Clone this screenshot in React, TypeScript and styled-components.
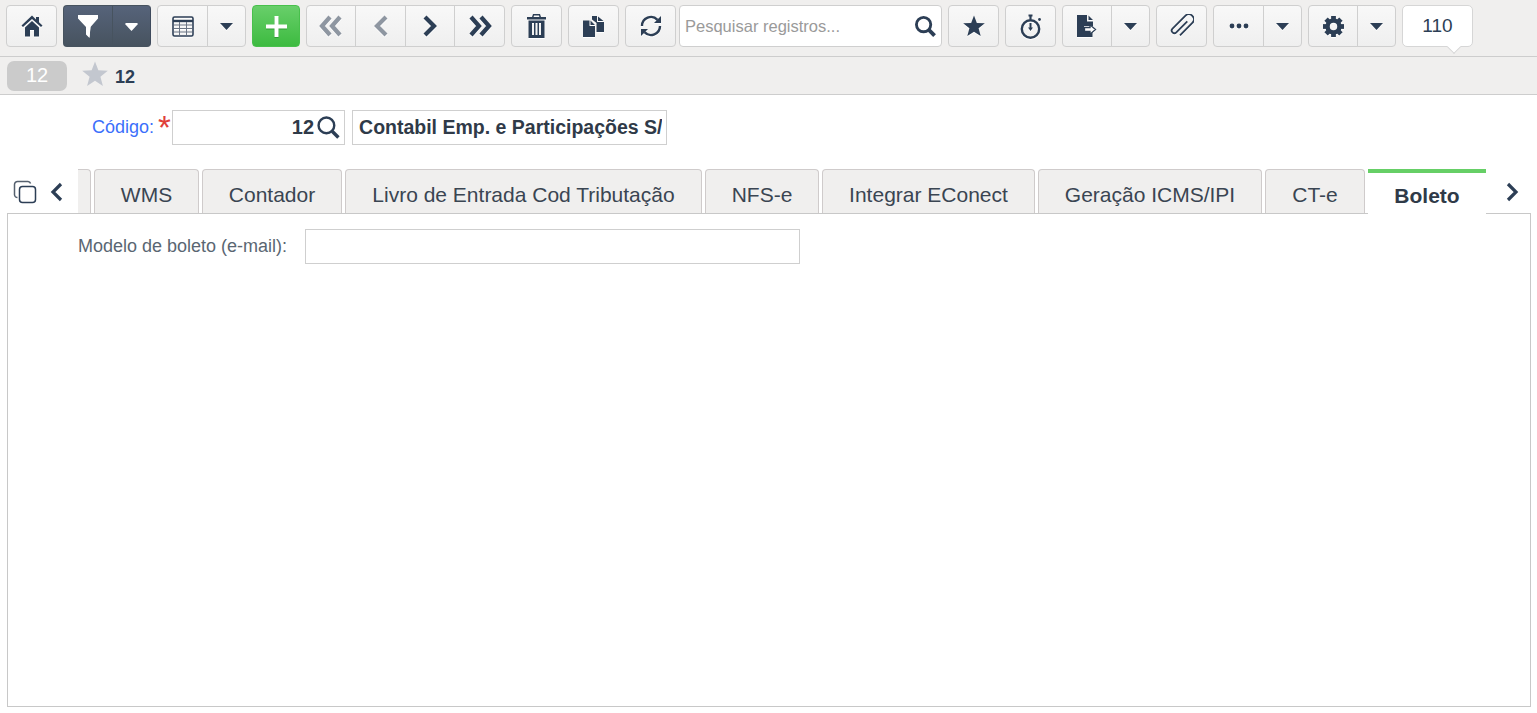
import { FC, ReactNode } from "react";
import styled, { createGlobalStyle } from "styled-components";

const navy = "#2c3e55";

const GlobalStyle = createGlobalStyle`
  html, body {
    margin: 0;
    padding: 0;
    height: 100%;
    background: #fff;
    font-family: "Liberation Sans", Arial, sans-serif;
    color: ${navy};
    overflow: hidden;
  }
`;

const Page = styled.div`
  display: flex;
  flex-direction: column;
  height: 713px;
`;

const Toolbar = styled.div`
  display: flex;
  align-items: flex-start;
  gap: 6px;
  height: 57px;
  padding: 5px 0 0 6px;
  box-sizing: border-box;
  background: #f0efee;
  border-bottom: 1px solid #cdcdcd;
`;

const Btn = styled.div<{ $w?: number }>`
  display: flex;
  align-items: center;
  justify-content: center;
  box-sizing: border-box;
  width: ${(p) => p.$w ?? 51}px;
  height: 42px;
  flex: none;
  border: 1px solid #cfcfcf;
  border-radius: 4px;
  background: linear-gradient(#f8f8f8, #efefef);
  color: ${navy};
  svg {
    filter: drop-shadow(0 1px 0 #fff);
  }
`;

const Group = styled.div<{ $dark?: boolean }>`
  display: flex;
  flex: none;
  ${Btn} {
    border-radius: 0;
    margin-left: -1px;
    ${(p) =>
      p.$dark &&
      `background: linear-gradient(#56637a, #47535f);
       border-color: #47535f;
       border-right-color: #3e4a5c;
       color: #fff;`}
  }
  ${Btn}:first-child {
    margin-left: 0;
    border-radius: 4px 0 0 4px;
  }
  ${Btn}:last-child {
    border-radius: 0 4px 4px 0;
  }
`;

const AddBtn = styled(Btn)`
  border-color: #48c04c;
  background: linear-gradient(#68cf6a, #3dbb40);
  color: #fff;
  svg {
    filter: drop-shadow(0 1px 0 #2f9a33);
  }
`;

const SearchBox = styled.div`
  display: flex;
  align-items: center;
  justify-content: space-between;
  box-sizing: border-box;
  width: 263px;
  height: 42px;
  margin-left: -3px;
  padding: 0 5px 0 5px;
  flex: none;
  background: #fff;
  border: 1px solid #cfcfcf;
  border-radius: 4px;
  font-size: 16.5px;
  color: #9a9a9a;
`;

const Counter = styled.div`
  position: relative;
  display: flex;
  align-items: center;
  justify-content: center;
  box-sizing: border-box;
  width: 71px;
  height: 42px;
  background: #fff;
  border: 1px solid #d6d6d6;
  border-radius: 5px;
  font-size: 19px;
  color: ${navy};
  &::after {
    content: "";
    position: absolute;
    left: 46px;
    bottom: -6px;
    width: 9px;
    height: 9px;
    background: #fff;
    border-right: 1px solid #d6d6d6;
    border-bottom: 1px solid #d6d6d6;
    transform: rotate(45deg);
  }
`;

const RecordBar = styled.div`
  display: flex;
  align-items: center;
  height: 38px;
  padding-left: 7px;
  box-sizing: border-box;
  background: #f0efee;
  border-bottom: 1px solid #cdcdcd;
`;

const RecordPill = styled.div`
  display: flex;
  align-items: center;
  justify-content: center;
  width: 60px;
  height: 30px;
  background: #cbcbcb;
  border-radius: 7px;
  color: #fff;
  font-size: 20px;
  margin-right: 15px;
`;

const RecordStar = styled.span`
  display: flex;
  margin-bottom: 4px;
`;

const RecordName = styled.span`
  margin: 3px 0 0 7px;
  font-size: 18px;
  font-weight: bold;
`;

const CodeRow = styled.div`
  display: flex;
  align-items: center;
  height: 35px;
  margin-top: 15px;
  padding-left: 92px;
`;

const Label = styled.label<{ $blue?: boolean }>`
  font-size: 18px;
  color: ${(p) => (p.$blue ? "#3b6ffb" : "#5a6672")};
`;

const Required = styled.span`
  width: 14px;
  margin-left: 4px;
  font-size: 33px;
  line-height: 24px;
  height: 24px;
  color: #e0403a;
`;

const CodeInput = styled.div`
  display: flex;
  align-items: center;
  justify-content: flex-end;
  box-sizing: border-box;
  width: 173px;
  height: 35px;
  padding-right: 4px;
  gap: 3px;
  border: 1px solid #cfcfcf;
  font-size: 20px;
  font-weight: bold;
  color: #2f3a48;
`;

const NameInput = styled.div`
  box-sizing: border-box;
  width: 315px;
  height: 35px;
  margin-left: 7px;
  padding: 0 4px 0 6px;
  line-height: 33px;
  border: 1px solid #cfcfcf;
  font-size: 19.5px;
  font-weight: bold;
  color: #2f3a48;
`;

const NameText = styled.div`
  white-space: nowrap;
  overflow: hidden;
`;

const TabRow = styled.div`
  display: flex;
  align-items: flex-end;
  height: 44px;
  margin-top: 24px;
  padding-left: 13px;
`;

const TabTools = styled.div`
  display: flex;
  align-items: center;
  width: 65px;
  height: 44px;
  padding-top: 2px;
  box-sizing: border-box;
  gap: 12px;
  flex: none;
`;

const Tab = styled.div<{ $w: number; $active?: boolean }>`
  display: flex;
  align-items: center;
  justify-content: center;
  box-sizing: border-box;
  width: ${(p) => p.$w}px;
  height: 44px;
  flex: none;
  margin-right: 3px;
  font-size: 21px;
  color: #3a4552;
  background: #f0efee;
  border: 1px solid #cfcbcb;
  border-bottom: 0;
  border-radius: 4px 4px 0 0;
  padding-top: 6px;
  ${(p) =>
    p.$active &&
    `background: #fff;
     border: 0;
     border-top: 4px solid #66cf66;
     border-radius: 0;
     font-weight: bold;
     color: #2f3a48;
     position: relative;
     z-index: 1;
     height: 45px;
     margin-bottom: -1px;
     padding-top: 5px;`}
`;

const TabStub = styled(Tab)`
  border-left: 0;
  border-radius: 0 4px 0 0;
`;

const TabNext = styled.div`
  display: flex;
  align-items: center;
  margin-left: 15px;
  height: 44px;
  padding-top: 2px;
  box-sizing: border-box;
`;

const Panel = styled.div`
  box-sizing: border-box;
  height: 494px;
  margin: 0 6px 0 7px;
  padding: 15px 0 0 70px;
  border: 1px solid #c8c8c8;
`;

const FieldRow = styled.div`
  display: flex;
  align-items: center;
  gap: 18px;
`;

const TextField = styled.div`
  box-sizing: border-box;
  width: 495px;
  height: 35px;
  border: 1px solid #cfcfcf;
`;

const Caret: FC = () => (
  <svg width="13" height="7" viewBox="0 0 13 7">
    <path d="M0 0h13L6.500 7z" fill="currentColor" />
  </svg>
);

const Chevrons: FC<{ points: string[]; faded?: boolean; w?: number; weight?: number }> = ({
  points,
  faded,
  w = 16,
  weight = 4.2,
}) => (
  <svg width={w} height="24" viewBox={`0 0 ${w} 24`} fill="none" stroke={faded ? "#8e96a1" : navy} strokeWidth={weight}>
    {points.map((p) => (
      <polyline key={p} points={p} />
    ))}
  </svg>
);

const Home: FC = () => (
  <svg width="22" height="22" viewBox="0 0 22 22" fill={navy}>
    <path d="M11 .5.500 10.500 2 12 11 4l9 8 1.500-1.500L18 7.200V2h-3v2.400z" />
    <path d="M4 12.500 11 6l7 6.500V21.500h-5V15H9v6.500H4z" />
  </svg>
);

const Funnel: FC = () => (
  <svg width="20" height="22" viewBox="0 0 20 22">
    <path d="M0 0h20v2.500L12.500 11l-1 11L8 18.500V11L0 2.500z" fill="#fff" />
  </svg>
);

const TableIcon: FC = () => (
  <svg width="22" height="21" viewBox="0 0 22 21" fill="none">
    <rect x="1" y="1" width="20" height="19" rx="1.500" stroke={navy} strokeWidth="1.600" />
    <path d="M1 5h20" stroke={navy} strokeWidth="2.400" />
    <path d="M2 9h18M2 12.500h18M2 16h18M7.500 6v13M14.500 6v13" stroke="#6a7484" strokeWidth="1" />
  </svg>
);

const Plus: FC = () => (
  <svg width="21" height="21" viewBox="0 0 21 21">
    <path d="M8.500 0h4v8.500H21v4h-8.500V21h-4v-8.500H0v-4h8.500z" fill="#fff" />
  </svg>
);

const Trash: FC = () => (
  <svg width="19" height="24" viewBox="0 0 19 24" fill={navy}>
    <path d="M6 0h7l1 3h5v2.500H0V3h5zM7 1.500 6.600 3h5.800L12 1.500z" fillRule="evenodd" />
    <path d="M1.500 6.500h16V24h-16zM5 9v12h2V9zm3.500 0v12h2V9zM12 9v12h2V9z" fillRule="evenodd" />
  </svg>
);

const CopyIcon: FC = () => (
  <svg width="21" height="21" viewBox="0 0 21 21" fill={navy}>
    <path d="M9 0h5v6h7v10h-7.500V7L9 3.500zM15 .5 20.500 5H15z" />
    <path d="M0 4.500h6.500V10H12v11H0zM7.500 4.500l4.500 4.500H7.500z" />
  </svg>
);

const Refresh: FC = () => (
  <svg width="22" height="22" viewBox="0 0 22 22" fill="none" stroke={navy} strokeWidth="2.400">
    <path d="M2 11a9 9 0 0 1 15.500-6.200" />
    <path d="M20 11a9 9 0 0 1-15.500 6.200" />
    <path d="M21 1v7h-7z" fill={navy} stroke="none" />
    <path d="M1 21v-7h7z" fill={navy} stroke="none" />
  </svg>
);

const Timer: FC = () => (
  <svg width="22" height="25" viewBox="0 0 22 25" fill="none" stroke={navy}>
    <circle cx="10.500" cy="15" r="8.700" strokeWidth="2.400" />
    <path d="M10.500 9v5" strokeWidth="2" />
    <path d="M8 13.500h5l-2.500 3.500z" fill={navy} stroke="none" />
    <path d="M8.500 1.500h4M10.500 1.500v4" strokeWidth="2.200" />
    <circle cx="19.500" cy="5.500" r="1.400" fill={navy} stroke="none" />
  </svg>
);

const ExportIcon: FC = () => (
  <svg width="20" height="22" viewBox="0 0 20 22">
    <path d="M0 0h10v6.500h6V11h-6v0H7v6h8.500v5H0zM11.500.5 16 5h-4.500z" fill={navy} />
    <path d="M7.500 12.500h5.500V9.800l5.500 4.700-5.500 4.700V16.500H7.500z" fill="#fff" stroke={navy} strokeWidth="1.300" />
  </svg>
);

const Clip: FC = () => (
  <svg width="24" height="24" viewBox="0 0 24 24" fill="none" stroke={navy} strokeWidth="1.800">
    <g transform="rotate(45 12 12)">
      <path d="M12.500 5v15.500a2.700 2.700 0 0 1-5.400 0V2.500a5 5 0 0 1 10 0V20" />
    </g>
  </svg>
);

const Dots: FC = () => (
  <svg width="20" height="6" viewBox="0 0 20 6" fill={navy}>
    <circle cx="3" cy="3" r="2.400" />
    <circle cx="10" cy="3" r="2.400" />
    <circle cx="17" cy="3" r="2.400" />
  </svg>
);

const Gear: FC = () => (
  <svg width="21" height="21" viewBox="0 0 22 22" fill={navy}>
    <circle cx="11" cy="11" r="6.200" fill="none" stroke={navy} strokeWidth="4.600" />
    {[0, 45, 90, 135, 180, 225, 270, 315].map((a) => (
      <rect key={a} x="8.500" y="0" width="5" height="5" transform={`rotate(${a} 11 11)`} />
    ))}
  </svg>
);

const Star: FC<{ size: number; color?: string }> = ({ size, color = navy }) => (
  <svg width={size} height={size} viewBox="0 0 24 24" fill={color}>
    <path d="M12 0.500 15.100 8.600 23.800 9 17 14.500 19.300 23 12 18.200 4.700 23 7 14.500 .2 9l8.700-.4z" />
  </svg>
);

const Magnifier: FC<{ size: number; weight: number }> = ({ size, weight }) => (
  <svg width={size} height={size} viewBox="0 0 22 22" fill="none" stroke={navy}>
    <circle cx="9" cy="9" r="7.500" strokeWidth={weight} />
    <path d="M14.500 14.500 20.500 20.500" strokeWidth={weight + 1} />
  </svg>
);

const CopyOutline: FC = () => (
  <svg width="24" height="24" viewBox="0 0 24 24" fill="none" stroke={navy} strokeWidth="1.500">
    <rect x="6.500" y="6.500" width="16" height="16" rx="3" />
    <path d="M4.500 17.500A3 3 0 0 1 1.500 15V4.500a3 3 0 0 1 3-3H15a3 3 0 0 1 2.600 2" stroke="#55606e" />
  </svg>
);

const IconBtn: FC<{ w?: number; children: ReactNode }> = ({ w, children }) => <Btn $w={w}>{children}</Btn>;

const tabs = [
  { label: "WMS", w: 105 },
  { label: "Contador", w: 140 },
  { label: "Livro de Entrada Cod Tributação", w: 357 },
  { label: "NFS-e", w: 114 },
  { label: "Integrar EConect", w: 213 },
  { label: "Geração ICMS/IPI", w: 224 },
  { label: "CT-e", w: 100 },
];

export default function App() {
  return (
    <Page>
      <GlobalStyle />
      <Toolbar>
        <IconBtn>
          <Home />
        </IconBtn>
        <Group $dark>
          <Btn $w={50}>
            <Funnel />
          </Btn>
          <Btn $w={39}>
            <Caret />
          </Btn>
        </Group>
        <Group>
          <Btn $w={51}>
            <TableIcon />
          </Btn>
          <Btn $w={39}>
            <Caret />
          </Btn>
        </Group>
        <AddBtn $w={48}>
          <Plus />
        </AddBtn>
        <Group>
          <Btn $w={50}>
            <Chevrons faded w={24} points={["11,3 3,12 11,21", "21,3 13,12 21,21"]} />
          </Btn>
          <Btn $w={51}>
            <Chevrons faded points={["13,3 4,12 13,21"]} />
          </Btn>
          <Btn $w={50}>
            <Chevrons points={["3,3 12,12 3,21"]} />
          </Btn>
          <Btn $w={51}>
            <Chevrons w={24} points={["3,3 11,12 3,21", "13,3 21,12 13,21"]} />
          </Btn>
        </Group>
        <IconBtn>
          <Trash />
        </IconBtn>
        <IconBtn>
          <CopyIcon />
        </IconBtn>
        <IconBtn>
          <Refresh />
        </IconBtn>
        <SearchBox>
          Pesquisar registros...
          <Magnifier size={21} weight={3} />
        </SearchBox>
        <IconBtn>
          <Star size={22} />
        </IconBtn>
        <IconBtn>
          <Timer />
        </IconBtn>
        <Group>
          <Btn $w={50}>
            <ExportIcon />
          </Btn>
          <Btn $w={39}>
            <Caret />
          </Btn>
        </Group>
        <IconBtn>
          <Clip />
        </IconBtn>
        <Group>
          <Btn $w={51}>
            <Dots />
          </Btn>
          <Btn $w={39}>
            <Caret />
          </Btn>
        </Group>
        <Group>
          <Btn $w={50}>
            <Gear />
          </Btn>
          <Btn $w={39}>
            <Caret />
          </Btn>
        </Group>
        <Counter>110</Counter>
      </Toolbar>
      <RecordBar>
        <RecordPill>12</RecordPill>
        <RecordStar>
          <Star size={26} color="#c3c7cf" />
        </RecordStar>
        <RecordName>12</RecordName>
      </RecordBar>
      <CodeRow>
        <Label $blue>Código:</Label>
        <Required>*</Required>
        <CodeInput>
          12
          <Magnifier size={23} weight={2.300} />
        </CodeInput>
        <NameInput>
          <NameText>Contabil Emp. e Participações S/A</NameText>
        </NameInput>
      </CodeRow>
      <TabRow>
        <TabTools>
          <CopyOutline />
          <Chevrons weight={3.200} points={["12,4 4,12 12,20"]} />
        </TabTools>
        <TabStub $w={13}> </TabStub>
        {tabs.map((t) => (
          <Tab key={t.label} $w={t.w}>
            {t.label}
          </Tab>
        ))}
        <Tab $w={118} $active>
          Boleto
        </Tab>
        <TabNext>
          <Chevrons weight={3.200} points={["4,4 12,12 4,20"]} />
        </TabNext>
      </TabRow>
      <Panel>
        <FieldRow>
          <Label>Modelo de boleto (e-mail):</Label>
          <TextField />
        </FieldRow>
      </Panel>
    </Page>
  );
}
